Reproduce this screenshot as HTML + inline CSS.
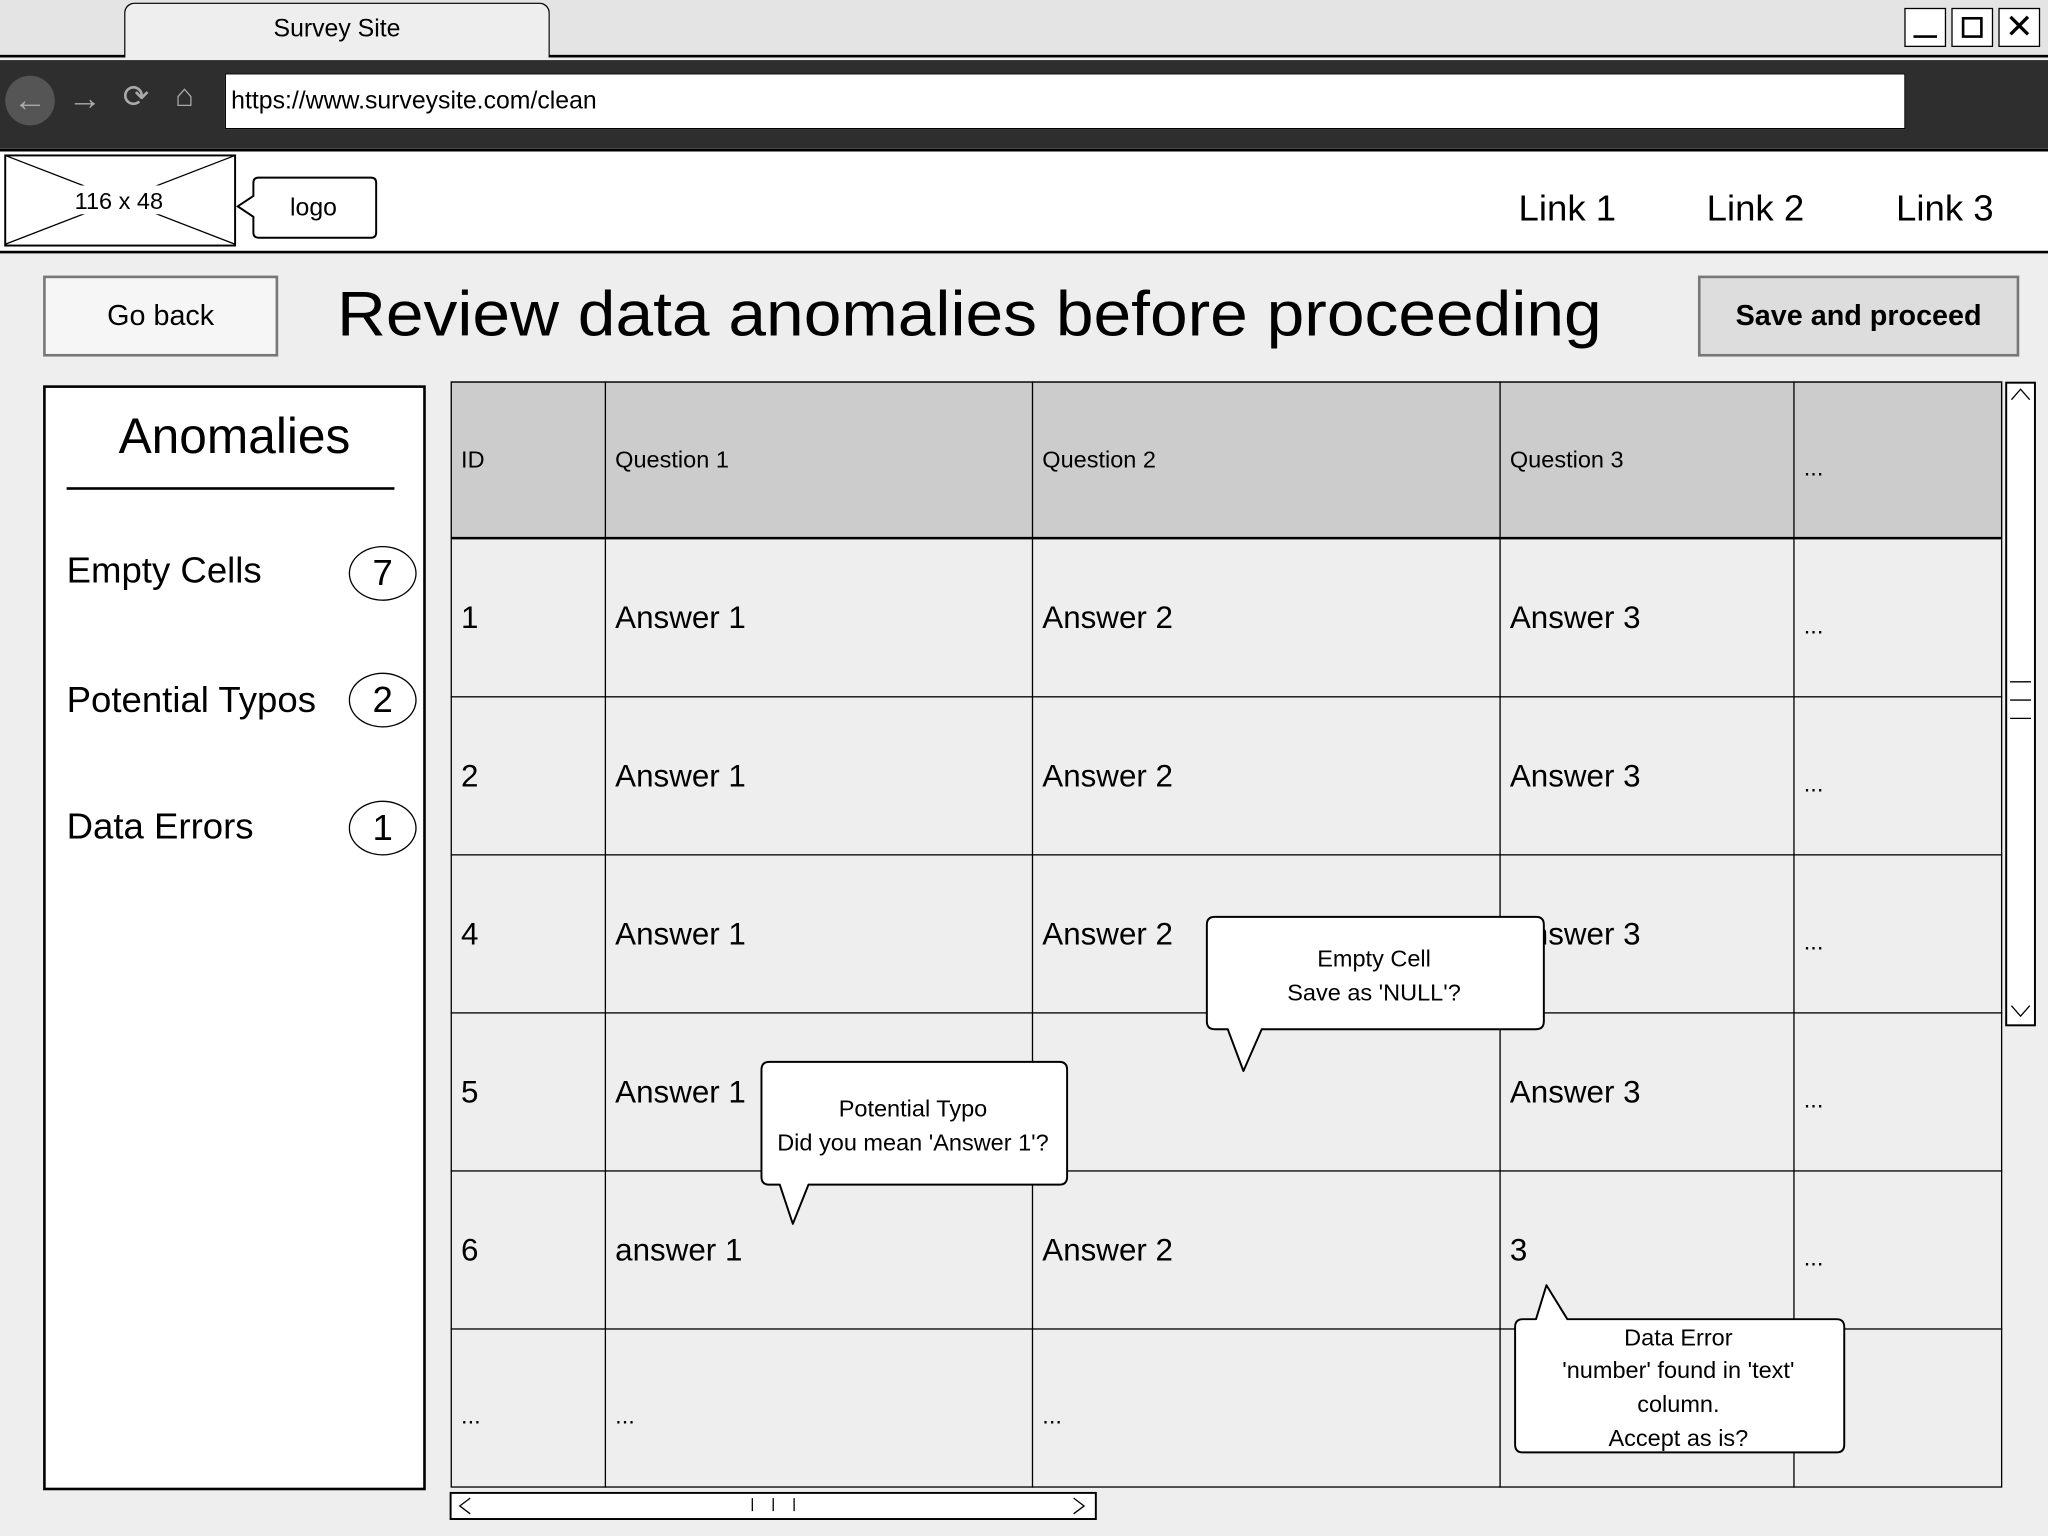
<!DOCTYPE html>
<html><head><meta charset="utf-8"><style>
*{margin:0;padding:0;box-sizing:border-box}
html,body{width:2048px;height:1536px;overflow:hidden;background:#eee}
#w{position:absolute;left:0;top:0;width:1568px;height:1176px;transform:scale(1.306122);transform-origin:0 0;font-family:"Liberation Sans",sans-serif;color:#000;background:#eee}
.a{position:absolute}
.cell{position:absolute;font-size:24px;display:flex;align-items:center;padding-left:8px}
.hd{font-size:18px}
.badge{position:absolute;width:52px;height:42px;border:1.5px solid #000;border-radius:50%;font-size:28px;text-align:center;line-height:40px;left:267px}
.si{position:absolute;left:51px;font-size:28px}
</style></head><body><div id="w">
<div class="a" style="left:0;top:0;width:1568px;height:44px;background:#e4e4e4;border-bottom:2px solid #000"></div>
<div class="a" style="left:95px;top:2px;width:326px;height:42px;background:#eee;border:1.5px solid #000;border-bottom:none;border-radius:8px 8px 0 0;font-size:19px;text-align:center;line-height:40px">Survey Site</div>
<div class="a" style="left:1458px;top:6px;width:32px;height:30px;border:1.5px solid #000;background:#fff"><div class="a" style="left:6px;top:20px;width:18px;border-top:2px solid #000"></div></div>
<div class="a" style="left:1494px;top:6px;width:32px;height:30px;border:1.5px solid #000;background:#fff"><div class="a" style="left:7px;top:6px;width:16px;height:16px;border:2px solid #000"></div></div>
<div class="a" style="left:1530px;top:6px;width:32px;height:30px;border:1.5px solid #000;background:#fff;font-size:26px;line-height:26px;text-align:center">✕</div>
<div class="a" style="left:0;top:46px;width:1568px;height:68px;background:#2e2e2e"></div>
<div class="a" style="left:4px;top:58px;width:38px;height:38px;border-radius:50%;background:#555;color:#aaa;font-size:26px;text-align:center;line-height:36px">←</div>
<div class="a" style="left:52px;top:60px;color:#aaa;font-size:26px">→</div>
<div class="a" style="left:94px;top:60px;color:#aaa;font-size:24px">⟳</div>
<div class="a" style="left:134px;top:60px;color:#aaa;font-size:24px">⌂</div>
<div class="a" style="left:172px;top:56px;width:1287px;height:43px;background:#fff;border:1px solid #000;font-size:19px;line-height:41px;padding-left:4px">https://www.surveysite.com/clean</div>
<div class="a" style="left:0;top:114px;width:1568px;height:80px;background:#fff;border-top:2px solid #000;border-bottom:2px solid #000"></div>
<svg class="a" style="left:3px;top:118px" width="178" height="71"><rect x="1" y="1" width="176" height="69" fill="#fff" stroke="#000" stroke-width="1.5"/><line x1="1" y1="69" x2="177" y2="1" stroke="#000"/><line x1="1" y1="1" x2="177" y2="69" stroke="#000"/><rect x="50" y="24" width="76" height="22" fill="#fff"/><text x="88" y="42" font-size="18" text-anchor="middle" font-family="Liberation Sans">116 x 48</text></svg>
<svg class="a" style="left:180px;top:134px" width="112" height="50"><path d="M18 2 H104 Q108 2 108 6 V44 Q108 48 104 48 H18 Q14 48 14 44 V32 L2 24 L14 16 V6 Q14 2 18 2 Z" fill="#fff" stroke="#000" stroke-width="1.5"/><text x="60" y="31" font-size="19" text-anchor="middle" font-family="Liberation Sans">logo</text></svg>
<div class="a" style="left:1160px;top:144px;width:80px;text-align:center;font-size:28px">Link 1</div>
<div class="a" style="left:1304px;top:144px;width:80px;text-align:center;font-size:28px">Link 2</div>
<div class="a" style="left:1449px;top:144px;width:80px;text-align:center;font-size:28px">Link 3</div>
<div class="a" style="left:33px;top:211px;width:180px;height:62px;background:#f6f6f6;border:2px solid #777;font-size:22px;text-align:center;line-height:58px">Go back</div>
<div class="a" style="left:258px;top:214px;font-size:48px;white-space:nowrap;transform:scaleX(1.08);transform-origin:0 0">Review data anomalies before proceeding</div>
<div class="a" style="left:1300px;top:211px;width:246px;height:62px;background:#ddd;border:2px solid #777;font-size:22px;font-weight:bold;text-align:center;line-height:58px">Save and proceed</div>
<div class="a" style="left:33px;top:295px;width:293px;height:846px;background:#fff;border:2px solid #000"></div>
<div class="a" style="left:33px;top:314px;width:293px;text-align:center;font-size:38px">Anomalies</div>
<div class="a" style="left:51px;top:373px;width:251px;border-top:2px solid #000"></div>
<div class="si" style="top:421px">Empty Cells</div><div class="badge" style="top:418px">7</div>
<div class="si" style="top:520px">Potential Typos</div><div class="badge" style="top:515px">2</div>
<div class="si" style="top:617px">Data Errors</div><div class="badge" style="top:613px">1</div>
<div class="a" style="left:345px;top:292px;width:1188px;height:847px;background:#eee;border:1.5px solid #000"></div>
<div class="a" style="left:345px;top:292px;width:1188px;height:121px;background:#ccc;border:1.5px solid #000;border-bottom:2px solid #000"></div>
<div class="a" style="left:463px;top:292px;height:847px;border-left:1.5px solid #000"></div>
<div class="a" style="left:790px;top:292px;height:847px;border-left:1.5px solid #000"></div>
<div class="a" style="left:1148px;top:292px;height:847px;border-left:1.5px solid #000"></div>
<div class="a" style="left:1373px;top:292px;height:847px;border-left:1.5px solid #000"></div>
<div class="a" style="left:345px;top:533px;width:1188px;border-top:1.5px solid #000"></div>
<div class="a" style="left:345px;top:654px;width:1188px;border-top:1.5px solid #000"></div>
<div class="a" style="left:345px;top:775px;width:1188px;border-top:1.5px solid #000"></div>
<div class="a" style="left:345px;top:896px;width:1188px;border-top:1.5px solid #000"></div>
<div class="a" style="left:345px;top:1017px;width:1188px;border-top:1.5px solid #000"></div>
<div class="cell hd" style="left:345px;top:292px;height:121px">ID</div>
<div class="cell hd" style="left:463px;top:292px;height:121px">Question 1</div>
<div class="cell hd" style="left:790px;top:292px;height:121px">Question 2</div>
<div class="cell hd" style="left:1148px;top:292px;height:121px">Question 3</div>
<div class="cell hd" style="left:1373px;top:298px;height:121px">...</div>
<div class="cell" style="left:345px;top:413px;height:121px">1</div><div class="cell" style="left:463px;top:413px;height:121px">Answer 1</div><div class="cell" style="left:790px;top:413px;height:121px">Answer 2</div><div class="cell" style="left:1148px;top:413px;height:121px">Answer 3</div><div class="cell" style="left:1373px;top:419px;height:121px;font-size:18px">...</div>
<div class="cell" style="left:345px;top:534px;height:121px">2</div><div class="cell" style="left:463px;top:534px;height:121px">Answer 1</div><div class="cell" style="left:790px;top:534px;height:121px">Answer 2</div><div class="cell" style="left:1148px;top:534px;height:121px">Answer 3</div><div class="cell" style="left:1373px;top:540px;height:121px;font-size:18px">...</div>
<div class="cell" style="left:345px;top:655px;height:121px">4</div><div class="cell" style="left:463px;top:655px;height:121px">Answer 1</div><div class="cell" style="left:790px;top:655px;height:121px">Answer 2</div><div class="cell" style="left:1148px;top:655px;height:121px">Answer 3</div><div class="cell" style="left:1373px;top:661px;height:121px;font-size:18px">...</div>
<div class="cell" style="left:345px;top:776px;height:121px">5</div><div class="cell" style="left:463px;top:776px;height:121px">Answer 1</div><div class="cell" style="left:1148px;top:776px;height:121px">Answer 3</div><div class="cell" style="left:1373px;top:782px;height:121px;font-size:18px">...</div>
<div class="cell" style="left:345px;top:897px;height:121px">6</div><div class="cell" style="left:463px;top:897px;height:121px">answer 1</div><div class="cell" style="left:790px;top:897px;height:121px">Answer 2</div><div class="cell" style="left:1148px;top:897px;height:121px">3</div><div class="cell" style="left:1373px;top:903px;height:121px;font-size:18px">...</div>
<div class="cell" style="left:345px;top:1024px;height:121px;font-size:18px">...</div><div class="cell" style="left:463px;top:1024px;height:121px;font-size:18px">...</div><div class="cell" style="left:790px;top:1024px;height:121px;font-size:18px">...</div>
<svg class="a" style="left:920px;top:700px" width="266" height="125"><path d="M10 2 H256 Q262 2 262 8 V82 Q262 88 256 88 H46 L32 120 L20 88 H10 Q4 88 4 82 V8 Q4 2 10 2 Z" fill="#fff" stroke="#000" stroke-width="1.5" stroke-linejoin="round"/><text x="132" y="40" font-size="18" text-anchor="middle" font-family="Liberation Sans">Empty Cell</text><text x="132" y="66" font-size="18" text-anchor="middle" font-family="Liberation Sans">Save as 'NULL'?</text></svg>
<svg class="a" style="left:579px;top:811px" width="242" height="128"><path d="M10 2 H232 Q238 2 238 8 V90 Q238 96 232 96 H40 L28 126 L18 96 H10 Q4 96 4 90 V8 Q4 2 10 2 Z" fill="#fff" stroke="#000" stroke-width="1.5" stroke-linejoin="round"/><text x="120" y="44" font-size="18" text-anchor="middle" font-family="Liberation Sans">Potential Typo</text><text x="120" y="70" font-size="18" text-anchor="middle" font-family="Liberation Sans">Did you mean 'Answer 1'?</text></svg>
<svg class="a" style="left:1156px;top:980px" width="262" height="136"><path d="M10 30 H20 L28 4 L44 30 H250 Q256 30 256 36 V126 Q256 132 250 132 H10 Q4 132 4 126 V36 Q4 30 10 30 Z" fill="#fff" stroke="#000" stroke-width="1.5" stroke-linejoin="round"/><text x="129" y="50" font-size="18" text-anchor="middle" font-family="Liberation Sans">Data Error</text><text x="129" y="75" font-size="18" text-anchor="middle" font-family="Liberation Sans">'number' found in 'text'</text><text x="129" y="101" font-size="18" text-anchor="middle" font-family="Liberation Sans">column.</text><text x="129" y="127" font-size="18" text-anchor="middle" font-family="Liberation Sans">Accept as is?</text></svg>
<svg class="a" style="left:1535px;top:292px" width="24" height="494"><rect x="1" y="1" width="22" height="492" fill="#fff" stroke="#000" stroke-width="1.5"/><path d="M5 14 L12 6 L19 14" fill="none" stroke="#000"/><path d="M5 478 L12 486 L19 478" fill="none" stroke="#000"/><path d="M4 230 H20 M4 244 H20 M4 258 H20" stroke="#000"/></svg>
<svg class="a" style="left:344px;top:1142px" width="496" height="22"><rect x="1" y="1" width="494" height="20" fill="#fff" stroke="#000" stroke-width="1.5"/><path d="M16 5 L8 11 L16 17" fill="none" stroke="#000"/><path d="M478 5 L486 11 L478 17" fill="none" stroke="#000"/><path d="M232 5 V15 M248 5 V15 M264 5 V15" stroke="#000"/></svg>
</div></body></html>
